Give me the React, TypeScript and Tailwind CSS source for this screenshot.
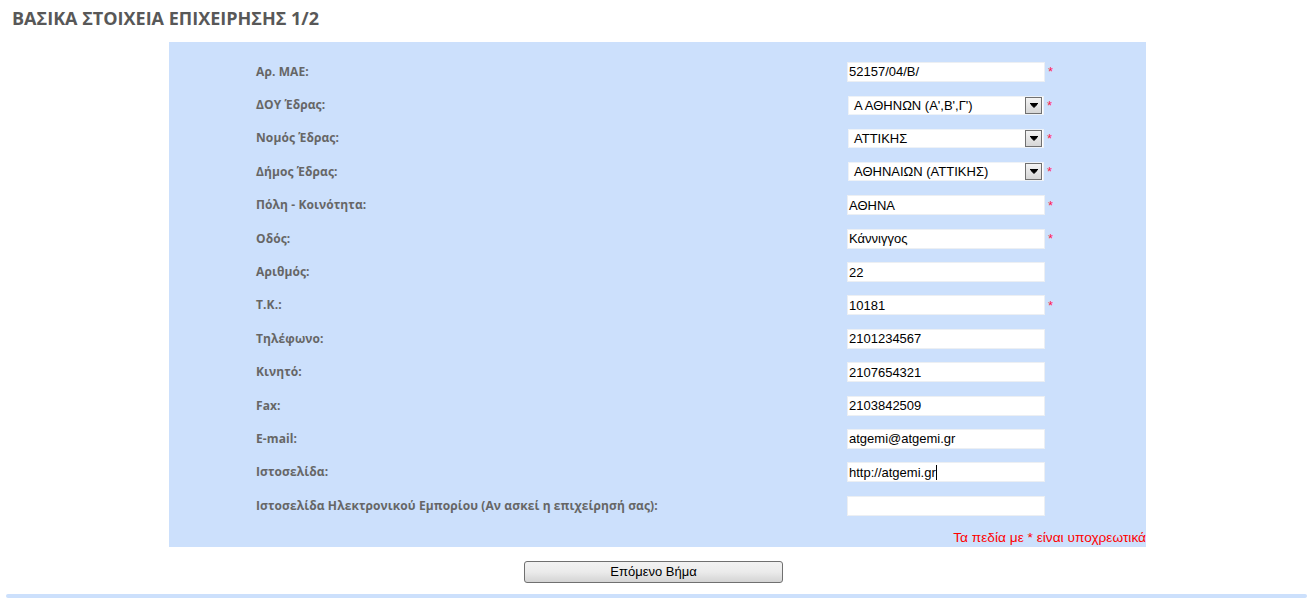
import React from "react";

type Row = { label: string; value: string; kind: "input" | "select"; req: boolean; caret?: boolean };

const rows: Row[] = [
  { label: "Αρ. ΜΑΕ:", value: "52157/04/B/", kind: "input", req: true },
  { label: "ΔΟΥ Έδρας:", value: "Α ΑΘΗΝΩΝ (Α',Β',Γ')", kind: "select", req: true },
  { label: "Νομός Έδρας:", value: "ΑΤΤΙΚΗΣ", kind: "select", req: true },
  { label: "Δήμος Έδρας:", value: "ΑΘΗΝΑΙΩΝ (ΑΤΤΙΚΗΣ)", kind: "select", req: true },
  { label: "Πόλη - Κοινότητα:", value: "ΑΘΗΝΑ", kind: "input", req: true },
  { label: "Οδός:", value: "Κάννιγγος", kind: "input", req: true },
  { label: "Αριθμός:", value: "22", kind: "input", req: false },
  { label: "Τ.Κ.:", value: "10181", kind: "input", req: true },
  { label: "Τηλέφωνο:", value: "2101234567", kind: "input", req: false },
  { label: "Κινητό:", value: "2107654321", kind: "input", req: false },
  { label: "Fax:", value: "2103842509", kind: "input", req: false },
  { label: "E-mail:", value: "atgemi@atgemi.gr", kind: "input", req: false },
  { label: "Ιστοσελίδα:", value: "http://atgemi.gr", kind: "input", req: false, caret: true },
  { label: "Ιστοσελίδα Ηλεκτρονικού Εμπορίου (Αν ασκεί η επιχείρησή σας):", value: "", kind: "input", req: false },
];

function Field({ row }: { row: Row }) {
  if (row.kind === "select") {
    return (
      <div className="flex items-center w-[196px] h-[19px] bg-white border border-[#eef2f7] pl-[5px] pr-[1px] ml-[1px]">
        <span className="flex-1 text-[13px] leading-none text-black whitespace-nowrap [font-family:'Liberation_Sans',Arial,sans-serif]">
          {row.value}
        </span>
        <span className="flex items-center justify-center w-[17px] h-[17px] border border-[#707070] bg-gradient-to-b from-[#f4f4f4] to-[#d6d6d6]">
          <svg width="8" height="5" viewBox="0 0 8 5">
            <path d="M0 0.5h8M1 1.5l3 3l3-3z" stroke="#000" strokeWidth="1" fill="#000" />
          </svg>
        </span>
      </div>
    );
  }
  return (
    <div className="flex items-center w-[198px] h-[20px] bg-white border border-[#eceff3] pl-[1px]">
      <span className="text-[13px] leading-none text-black whitespace-nowrap [font-family:'Liberation_Sans',Arial,sans-serif]">
        {row.value}
      </span>
      {row.caret && <span className="w-[1px] h-[15px] bg-black" />}
    </div>
  );
}

export default function App() {
  return (
    <div className="w-[1315px] h-[606px] bg-white overflow-hidden [font-family:'Open_Sans','Noto_Sans',sans-serif]">
      <h1 className="pl-[12px] pt-[6px] h-[42px] text-[18px] font-bold text-[#585858] leading-[24px]">
        ΒΑΣΙΚΑ ΣΤΟΙΧΕΙΑ ΕΠΙΧΕΙΡΗΣΗΣ 1/2
      </h1>
      <div className="ml-[169px] w-[977px] h-[505px] bg-[#cce0fc] flex flex-col pt-[13px]">
        {rows.map((r, i) => (
          <div key={i} className="flex items-center h-[33.4px] shrink-0">
            <div className="w-[678px] pl-[87px] text-[12px] font-bold text-[#666666] whitespace-nowrap tracking-[0.1px]">
              {r.label}
            </div>
            <Field row={r} />
            {r.req && (
              <span className="ml-[3px] text-[13px] text-[#ff2050] leading-none [font-family:'Liberation_Sans',Arial,sans-serif]">
                *
              </span>
            )}
          </div>
        ))}
        <div className="flex-1" />
        <div className="text-right text-[13.7px] leading-[16px] pb-[1px] text-[#ff0000] [font-family:'Liberation_Sans',Arial,sans-serif]">
          Τα πεδία με * είναι υποχρεωτικά
        </div>
      </div>
      <div className="mt-[14px] ml-[524px] w-[259px] h-[22px] rounded-[3px] border border-[#707070] bg-gradient-to-b from-[#f2f2f2] via-[#ebebeb] to-[#d4d4d4] flex items-center justify-center text-[13px] text-black [font-family:'Liberation_Sans',Arial,sans-serif]">
        Επόμενο Βήμα
      </div>
      <div className="mt-[11px] ml-[6px] w-[1301px] h-[4px] rounded-full bg-[#cce0fc]" />
    </div>
  );
}
